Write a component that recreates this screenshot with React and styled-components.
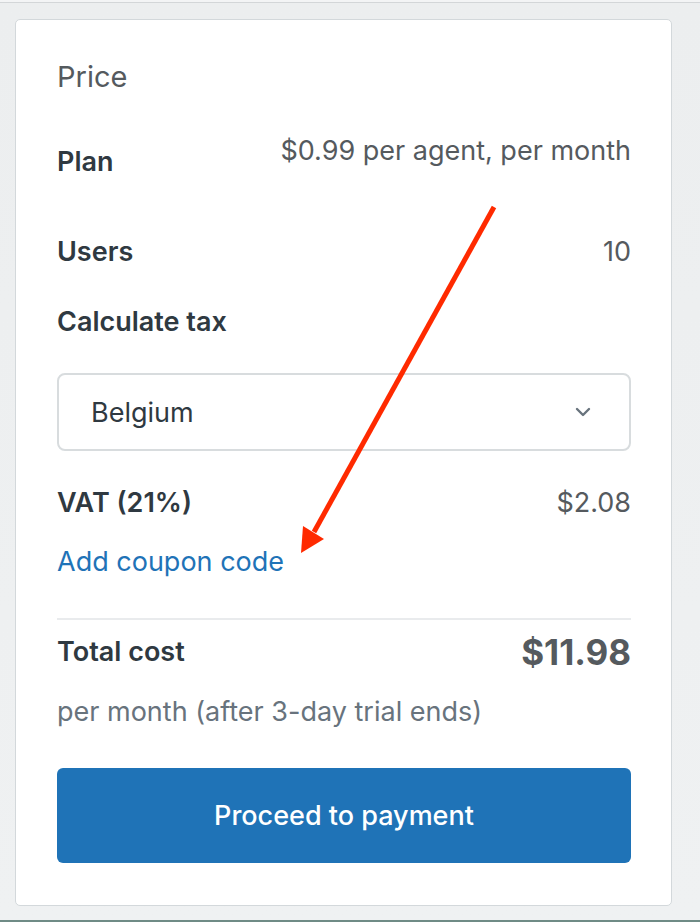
import React from "react";
import styled, { createGlobalStyle } from "styled-components";

const Global = createGlobalStyle`
  html, body { margin: 0; padding: 0; }
  body {
    font-family: Inter, Roboto, "Liberation Sans", Arial, sans-serif;
    background: #eef0f1;
    -webkit-font-smoothing: antialiased;
  }
  * { box-sizing: border-box; }
`;

const Page = styled.div`
  position: relative;
  height: 922px;
  overflow: hidden;
  border-top: 2px solid #f3f4f5;
  border-bottom: 2px solid #6f8b86;
  background: linear-gradient(180deg, #eceeef 0%, #eff1f2 100%);
`;

const TopLine = styled.div`
  height: 1px;
  background: #d3d6d8;
`;

const Frame = styled.div`
  padding: 16px 28px 0 15px;
`;

const Card = styled.section`
  background: #ffffff;
  border: 1px solid #d3d8db;
  border-radius: 5px;
  padding: 36px 40px 42px 41px;
  display: flex;
  flex-direction: column;
`;

const Title = styled.h2`
  margin: 0;
  font-size: 29px;
  line-height: 42px;
  font-weight: 400;
  color: #555a5e;
`;

const Row = styled.div`
  display: flex;
  justify-content: space-between;
  align-items: ${(p) => p.$align || "center"};
  margin-top: ${(p) => p.$mt || 0}px;
`;

const Label = styled.span`
  font-size: 27px;
  line-height: 36px;
  font-weight: 600;
  color: #2f3941;
  padding-top: ${(p) => p.$pt || 0}px;
`;

const Value = styled.span`
  font-size: ${(p) => p.$size || 27}px;
  line-height: ${(p) => (p.$size ? 40 : 36)}px;
  font-weight: ${(p) => (p.$bold ? 700 : 400)};
  color: #555a5e;
`;

const Select = styled.div`
  margin-top: 33px;
  height: 78px;
  flex-shrink: 0;
  border: 2px solid #d8dcde;
  border-radius: 8px;
  display: flex;
  align-items: center;
  justify-content: space-between;
  padding: 0 38px 0 32px;
  font-size: 27px;
  color: #2f3941;
`;

const Link = styled.a`
  margin-top: 23px;
  font-size: 27px;
  line-height: 36px;
  color: #1f73b7;
  text-decoration: none;
  align-self: flex-start;
`;

const Divider = styled.hr`
  margin: 38px 0 0;
  border: 0;
  height: 2px;
  flex-shrink: 0;
  background: #e9ebed;
`;

const Note = styled.p`
  margin: 22px 0 0;
  font-size: 27px;
  line-height: 36px;
  color: #68737d;
`;

const Button = styled.button`
  margin-top: 38px;
  height: 95px;
  flex-shrink: 0;
  width: 100%;
  border: 0;
  border-radius: 6px;
  background: #1f73b7;
  color: #ffffff;
  font-family: inherit;
  font-size: 27px;
  font-weight: 500;
`;

const Arrow = styled.svg`
  position: absolute;
  left: 0;
  top: 0;
  pointer-events: none;
`;

export default function App() {
  return (
    <>
      <Global />
      <Page>
        <TopLine />
        <Frame>
          <Card>
            <Title>Price</Title>
            <Row $align="flex-start" $mt={35}>
              <Label $pt={11}>Plan</Label>
              <Value>$0.99 per agent, per month</Value>
            </Row>
            <Row $mt={54}>
              <Label>Users</Label>
              <Value>10</Value>
            </Row>
            <Row $mt={34}>
              <Label>Calculate tax</Label>
            </Row>
            <Select>
              <span>Belgium</span>
              <svg width="16" height="10" viewBox="0 0 16 10">
                <path d="M2 2 L8 8 L14 2" fill="none" stroke="#68737d" strokeWidth="2.4" strokeLinecap="round" strokeLinejoin="round" />
              </svg>
            </Select>
            <Row $mt={34}>
              <Label>VAT (21%)</Label>
              <Value>$2.08</Value>
            </Row>
            <Link href="#">Add coupon code</Link>
            <Divider />
            <Row $mt={12}>
              <Label>Total cost</Label>
              <Value $size={35} $bold>$11.98</Value>
            </Row>
            <Note>per month (after 3-day trial ends)</Note>
            <Button>Proceed to payment</Button>
          </Card>
        </Frame>
        <Arrow width="700" height="922" viewBox="0 0 700 922">
          <line x1="494" y1="205" x2="314" y2="530" stroke="#ff2a00" strokeWidth="5" strokeLinecap="butt" />
          <polygon points="301,551 303,524 324,537" fill="#ff2a00" />
        </Arrow>
      </Page>
    </>
  );
}
